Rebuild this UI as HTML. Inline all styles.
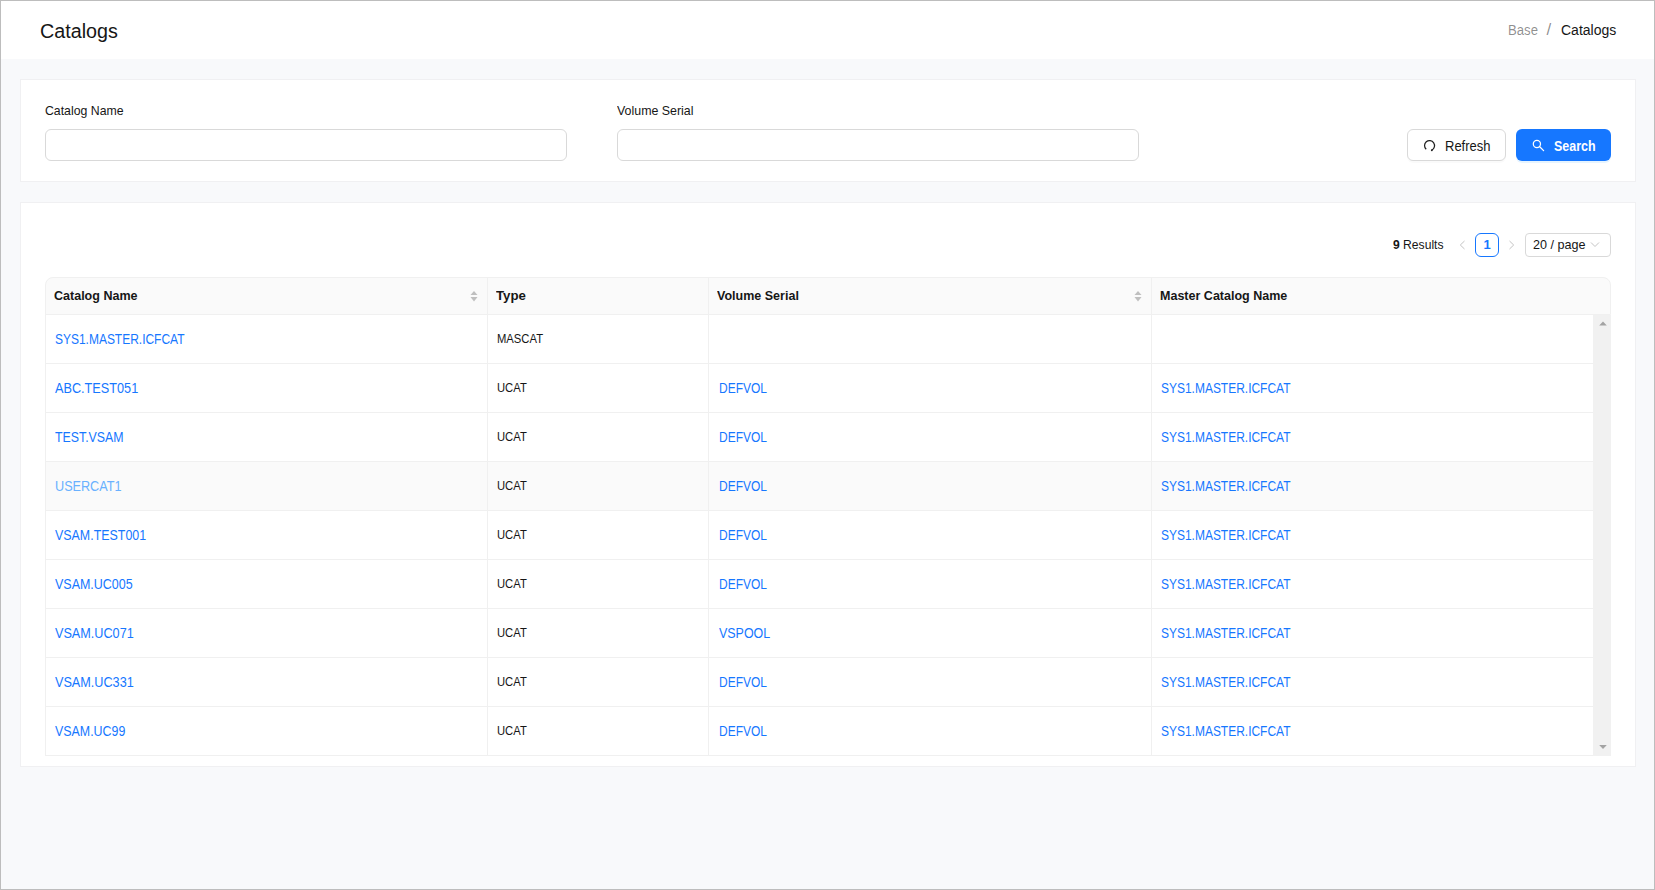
<!DOCTYPE html>
<html><head><meta charset="utf-8">
<style>
*{box-sizing:border-box;margin:0;padding:0}
html,body{width:1655px;height:890px;overflow:hidden}
body{font-family:"Liberation Sans",sans-serif;color:#161616;background:#f8f9fb;position:relative}
.frame{position:absolute;left:0;top:0;width:1655px;height:890px;border:1px solid #bdbdbd;pointer-events:none;z-index:10}
.abs{position:absolute;white-space:nowrap}
.hdr{position:absolute;left:1px;top:1px;width:1653px;height:58px;background:#fff}
.title{left:40px;top:20px;font-size:19.5px;line-height:22px}
.bc{left:1507px;top:21px;font-size:14px;line-height:16px}
.bcg{color:rgba(0,0,0,0.45)}
.bcs{padding:0 8px}
.card{position:absolute;left:20px;width:1616px;background:#fff;border:1px solid #f0f0f2}
.lbl{font-size:13px;line-height:16px}
.inp{position:absolute;top:129px;height:32px;width:522px;border:1px solid #d9d9d9;border-radius:6px;background:#fff}
.btn{position:absolute;top:129px;height:32px;border-radius:6px}
.btnd{left:1407px;width:99px;border:1px solid #d9d9d9;background:#fff;box-shadow:0 2px 0 rgba(0,0,0,0.02)}
.btnp{left:1516px;width:95px;background:#1677ff;box-shadow:0 2px 0 rgba(5,145,255,0.1)}
.btxt{font-size:13.5px;line-height:16px}
.bw{color:#fff;font-weight:bold}
.pg{font-size:13px;line-height:16px}
.pgbox{position:absolute;left:1475px;top:233px;width:24px;height:24px;border:1px solid #1677ff;border-radius:6px}
.pg1{left:1475px;top:237px;width:24px;text-align:center;font-size:13px;line-height:16px;font-weight:bold;color:#1677ff}
.sel{position:absolute;left:1525px;top:233px;width:86px;height:24px;border:1px solid #d9d9d9;border-radius:4px}
.th{position:absolute;left:45px;top:277px;width:1566px;height:38px;background:#fafafa;border:1px solid #f0f0f0;border-radius:8px 8px 0 0}
.vline{position:absolute;width:1px;background:#f0f0f0}
.hline{position:absolute;height:1px;background:#f0f0f0}
.htxt{font-size:13px;font-weight:bold;line-height:16px}
.link{color:#1677ff;font-size:13px;line-height:16px}
.hov{color:#69b1ff}
.txt{font-size:12.5px;line-height:16px}

</style></head><body>
<div class="frame"></div>
<div class="hdr"></div>
<div class="abs" style="left:40.3px;top:19.8px;font-size:19.5px;line-height:22px;transform:scaleX(1.012);transform-origin:0 0;">Catalogs</div>
<div class="abs" style="left:1508px;top:22px;font-size:14px;line-height:16px;color:rgba(0,0,0,0.45);transform:scaleX(0.94);transform-origin:0 0;">Base</div>
<div class="abs" style="left:1546.5px;top:21px;font-size:17px;line-height:18px;color:rgba(0,0,0,0.45);">/</div>
<div class="abs" style="left:1561px;top:22px;font-size:14px;line-height:16px;">Catalogs</div>
<div class="card" style="top:79px;height:103px"></div>
<div class="abs" style="left:45px;top:103px;font-size:13px;line-height:16px;transform:scaleX(0.945);transform-origin:0 0;">Catalog Name</div>
<div class="abs" style="left:617px;top:103px;font-size:13px;line-height:16px;transform:scaleX(0.954);transform-origin:0 0;">Volume Serial</div>
<div class="inp" style="left:45px"></div>
<div class="inp" style="left:617px"></div>
<div class="btn btnd"></div>
<div class="btn btnp"></div>
<svg class="abs" style="left:1418px;top:135px" width="24" height="20" viewBox="0 0 24 20"><path d="M13.82 15.06 A5.0 5.0 0 1 0 8.20 14.32" fill="none" stroke="#1f1f1f" stroke-width="1.25"/><circle cx="13.82" cy="15.26" r="0.95" fill="#1f1f1f"/></svg>
<div class="abs" style="left:1445px;top:137.5px;font-size:14px;line-height:16px;transform:scaleX(0.928);transform-origin:0 0;">Refresh</div>
<svg class="abs" style="left:1531px;top:138px" width="16" height="16" viewBox="0 0 16 16"><circle cx="5.9" cy="5.9" r="3.6" fill="none" stroke="#fff" stroke-width="1.25"/><path d="M8.5 8.5 L12.6 12.6" stroke="#fff" stroke-width="1.3" stroke-linecap="round"/></svg>
<div class="abs" style="left:1554px;top:137.5px;font-size:14px;line-height:16px;color:#fff;font-weight:bold;transform:scaleX(0.889);transform-origin:0 0;">Search</div>
<div class="card" style="top:202px;height:565px"></div>
<div class="abs" style="left:1393px;top:237px;font-size:13px;line-height:16px;transform:scaleX(0.932);transform-origin:0 0;"><b>9</b> Results</div>
<svg class="abs" style="left:1457px;top:238px" width="12" height="14" viewBox="0 0 12 14"><path d="M7.5 3 L3.3 7 L7.5 11" fill="none" stroke="#c4c4c4" stroke-width="1"/></svg>
<div class="pgbox"></div>
<div class="abs" style="left:1475px;top:237px;font-size:13px;line-height:16px;color:#1677ff;font-weight:bold;width:24px;text-align:center;">1</div>
<svg class="abs" style="left:1505px;top:238px" width="12" height="14" viewBox="0 0 12 14"><path d="M4.5 3 L8.7 7 L4.5 11" fill="none" stroke="#c4c4c4" stroke-width="1"/></svg>
<div class="sel"></div>
<div class="abs" style="left:1533px;top:237px;font-size:13px;line-height:16px;transform:scaleX(0.968);transform-origin:0 0;">20 / page</div>
<svg class="abs" style="left:1589px;top:240px" width="12" height="10" viewBox="0 0 12 10"><path d="M2 2.5 L6 6.5 L10 2.5" fill="none" stroke="#c4c4c4" stroke-width="1"/></svg>
<div class="th"></div>
<div class="abs" style="left:54px;top:288px;font-size:13px;line-height:16px;font-weight:bold;transform:scaleX(0.963);transform-origin:0 0;">Catalog Name</div>
<svg class="abs" style="left:470px;top:290px" width="8" height="13" viewBox="0 0 8 13"><path d="M4 1 L7.5 5 L0.5 5 Z" fill="#bfbfbf"/><path d="M0.5 7 L7.5 7 L4 11.5 Z" fill="#bfbfbf"/></svg>
<div class="abs" style="left:496px;top:288px;font-size:13px;line-height:16px;font-weight:bold;transform:scaleX(1.02);transform-origin:0 0;">Type</div>
<div class="abs" style="left:717px;top:288px;font-size:13px;line-height:16px;font-weight:bold;transform:scaleX(0.963);transform-origin:0 0;">Volume Serial</div>
<svg class="abs" style="left:1134px;top:290px" width="8" height="13" viewBox="0 0 8 13"><path d="M4 1 L7.5 5 L0.5 5 Z" fill="#bfbfbf"/><path d="M0.5 7 L7.5 7 L4 11.5 Z" fill="#bfbfbf"/></svg>
<div class="abs" style="left:1160px;top:288px;font-size:13px;line-height:16px;font-weight:bold;transform:scaleX(0.963);transform-origin:0 0;">Master Catalog Name</div>
<div class="hline" style="left:45px;top:363px;width:1548px"></div>
<div class="abs" style="left:55px;top:331px;font-size:14px;line-height:16px;color:#1677ff;transform:scaleX(0.855);transform-origin:0 0;">SYS1.MASTER.ICFCAT</div>
<div class="abs" style="left:497px;top:331px;font-size:13px;line-height:16px;transform:scaleX(0.865);transform-origin:0 0;">MASCAT</div>
<div class="hline" style="left:45px;top:412px;width:1548px"></div>
<div class="abs" style="left:55px;top:380px;font-size:14px;line-height:16px;color:#1677ff;transform:scaleX(0.906);transform-origin:0 0;">ABC.TEST051</div>
<div class="abs" style="left:497px;top:380px;font-size:13px;line-height:16px;transform:scaleX(0.865);transform-origin:0 0;">UCAT</div>
<div class="abs" style="left:719px;top:380px;font-size:14px;line-height:16px;color:#1677ff;transform:scaleX(0.855);transform-origin:0 0;">DEFVOL</div>
<div class="abs" style="left:1161px;top:380px;font-size:14px;line-height:16px;color:#1677ff;transform:scaleX(0.855);transform-origin:0 0;">SYS1.MASTER.ICFCAT</div>
<div class="hline" style="left:45px;top:461px;width:1548px"></div>
<div class="abs" style="left:55px;top:429px;font-size:14px;line-height:16px;color:#1677ff;transform:scaleX(0.882);transform-origin:0 0;">TEST.VSAM</div>
<div class="abs" style="left:497px;top:429px;font-size:13px;line-height:16px;transform:scaleX(0.865);transform-origin:0 0;">UCAT</div>
<div class="abs" style="left:719px;top:429px;font-size:14px;line-height:16px;color:#1677ff;transform:scaleX(0.855);transform-origin:0 0;">DEFVOL</div>
<div class="abs" style="left:1161px;top:429px;font-size:14px;line-height:16px;color:#1677ff;transform:scaleX(0.855);transform-origin:0 0;">SYS1.MASTER.ICFCAT</div>
<div class="abs" style="left:46px;top:462px;width:1547px;height:48px;background:#fafafa"></div>
<div class="hline" style="left:45px;top:510px;width:1548px"></div>
<div class="abs" style="left:55px;top:478px;font-size:14px;line-height:16px;color:#69b1ff;transform:scaleX(0.903);transform-origin:0 0;">USERCAT1</div>
<div class="abs" style="left:497px;top:478px;font-size:13px;line-height:16px;transform:scaleX(0.865);transform-origin:0 0;">UCAT</div>
<div class="abs" style="left:719px;top:478px;font-size:14px;line-height:16px;color:#1677ff;transform:scaleX(0.855);transform-origin:0 0;">DEFVOL</div>
<div class="abs" style="left:1161px;top:478px;font-size:14px;line-height:16px;color:#1677ff;transform:scaleX(0.855);transform-origin:0 0;">SYS1.MASTER.ICFCAT</div>
<div class="hline" style="left:45px;top:559px;width:1548px"></div>
<div class="abs" style="left:55px;top:527px;font-size:14px;line-height:16px;color:#1677ff;transform:scaleX(0.887);transform-origin:0 0;">VSAM.TEST001</div>
<div class="abs" style="left:497px;top:527px;font-size:13px;line-height:16px;transform:scaleX(0.865);transform-origin:0 0;">UCAT</div>
<div class="abs" style="left:719px;top:527px;font-size:14px;line-height:16px;color:#1677ff;transform:scaleX(0.855);transform-origin:0 0;">DEFVOL</div>
<div class="abs" style="left:1161px;top:527px;font-size:14px;line-height:16px;color:#1677ff;transform:scaleX(0.855);transform-origin:0 0;">SYS1.MASTER.ICFCAT</div>
<div class="hline" style="left:45px;top:608px;width:1548px"></div>
<div class="abs" style="left:55px;top:576px;font-size:14px;line-height:16px;color:#1677ff;transform:scaleX(0.891);transform-origin:0 0;">VSAM.UC005</div>
<div class="abs" style="left:497px;top:576px;font-size:13px;line-height:16px;transform:scaleX(0.865);transform-origin:0 0;">UCAT</div>
<div class="abs" style="left:719px;top:576px;font-size:14px;line-height:16px;color:#1677ff;transform:scaleX(0.855);transform-origin:0 0;">DEFVOL</div>
<div class="abs" style="left:1161px;top:576px;font-size:14px;line-height:16px;color:#1677ff;transform:scaleX(0.855);transform-origin:0 0;">SYS1.MASTER.ICFCAT</div>
<div class="hline" style="left:45px;top:657px;width:1548px"></div>
<div class="abs" style="left:55px;top:625px;font-size:14px;line-height:16px;color:#1677ff;transform:scaleX(0.903);transform-origin:0 0;">VSAM.UC071</div>
<div class="abs" style="left:497px;top:625px;font-size:13px;line-height:16px;transform:scaleX(0.865);transform-origin:0 0;">UCAT</div>
<div class="abs" style="left:719px;top:625px;font-size:14px;line-height:16px;color:#1677ff;transform:scaleX(0.89);transform-origin:0 0;">VSPOOL</div>
<div class="abs" style="left:1161px;top:625px;font-size:14px;line-height:16px;color:#1677ff;transform:scaleX(0.855);transform-origin:0 0;">SYS1.MASTER.ICFCAT</div>
<div class="hline" style="left:45px;top:706px;width:1548px"></div>
<div class="abs" style="left:55px;top:674px;font-size:14px;line-height:16px;color:#1677ff;transform:scaleX(0.903);transform-origin:0 0;">VSAM.UC331</div>
<div class="abs" style="left:497px;top:674px;font-size:13px;line-height:16px;transform:scaleX(0.865);transform-origin:0 0;">UCAT</div>
<div class="abs" style="left:719px;top:674px;font-size:14px;line-height:16px;color:#1677ff;transform:scaleX(0.855);transform-origin:0 0;">DEFVOL</div>
<div class="abs" style="left:1161px;top:674px;font-size:14px;line-height:16px;color:#1677ff;transform:scaleX(0.855);transform-origin:0 0;">SYS1.MASTER.ICFCAT</div>
<div class="hline" style="left:45px;top:755px;width:1548px"></div>
<div class="abs" style="left:55px;top:723px;font-size:14px;line-height:16px;color:#1677ff;transform:scaleX(0.886);transform-origin:0 0;">VSAM.UC99</div>
<div class="abs" style="left:497px;top:723px;font-size:13px;line-height:16px;transform:scaleX(0.865);transform-origin:0 0;">UCAT</div>
<div class="abs" style="left:719px;top:723px;font-size:14px;line-height:16px;color:#1677ff;transform:scaleX(0.855);transform-origin:0 0;">DEFVOL</div>
<div class="abs" style="left:1161px;top:723px;font-size:14px;line-height:16px;color:#1677ff;transform:scaleX(0.855);transform-origin:0 0;">SYS1.MASTER.ICFCAT</div>
<div class="vline" style="left:45px;top:285px;height:471px"></div>
<div class="vline" style="left:487px;top:278px;height:478px"></div>
<div class="vline" style="left:708px;top:278px;height:478px"></div>
<div class="vline" style="left:1151px;top:278px;height:478px"></div>
<div class="abs" style="left:1593px;top:315px;width:18px;height:441px;background:#f1f1f1"></div>
<svg class="abs" style="left:1597.5px;top:319px" width="10" height="8" viewBox="0 0 10 8"><path d="M1.2 6.6 L5 2.6 L8.8 6.6 Z" fill="#a3a3a3"/></svg>
<svg class="abs" style="left:1597.5px;top:743px" width="10" height="8" viewBox="0 0 10 8"><path d="M1.2 2 L8.8 2 L5 6 Z" fill="#a3a3a3"/></svg>
</body></html>
